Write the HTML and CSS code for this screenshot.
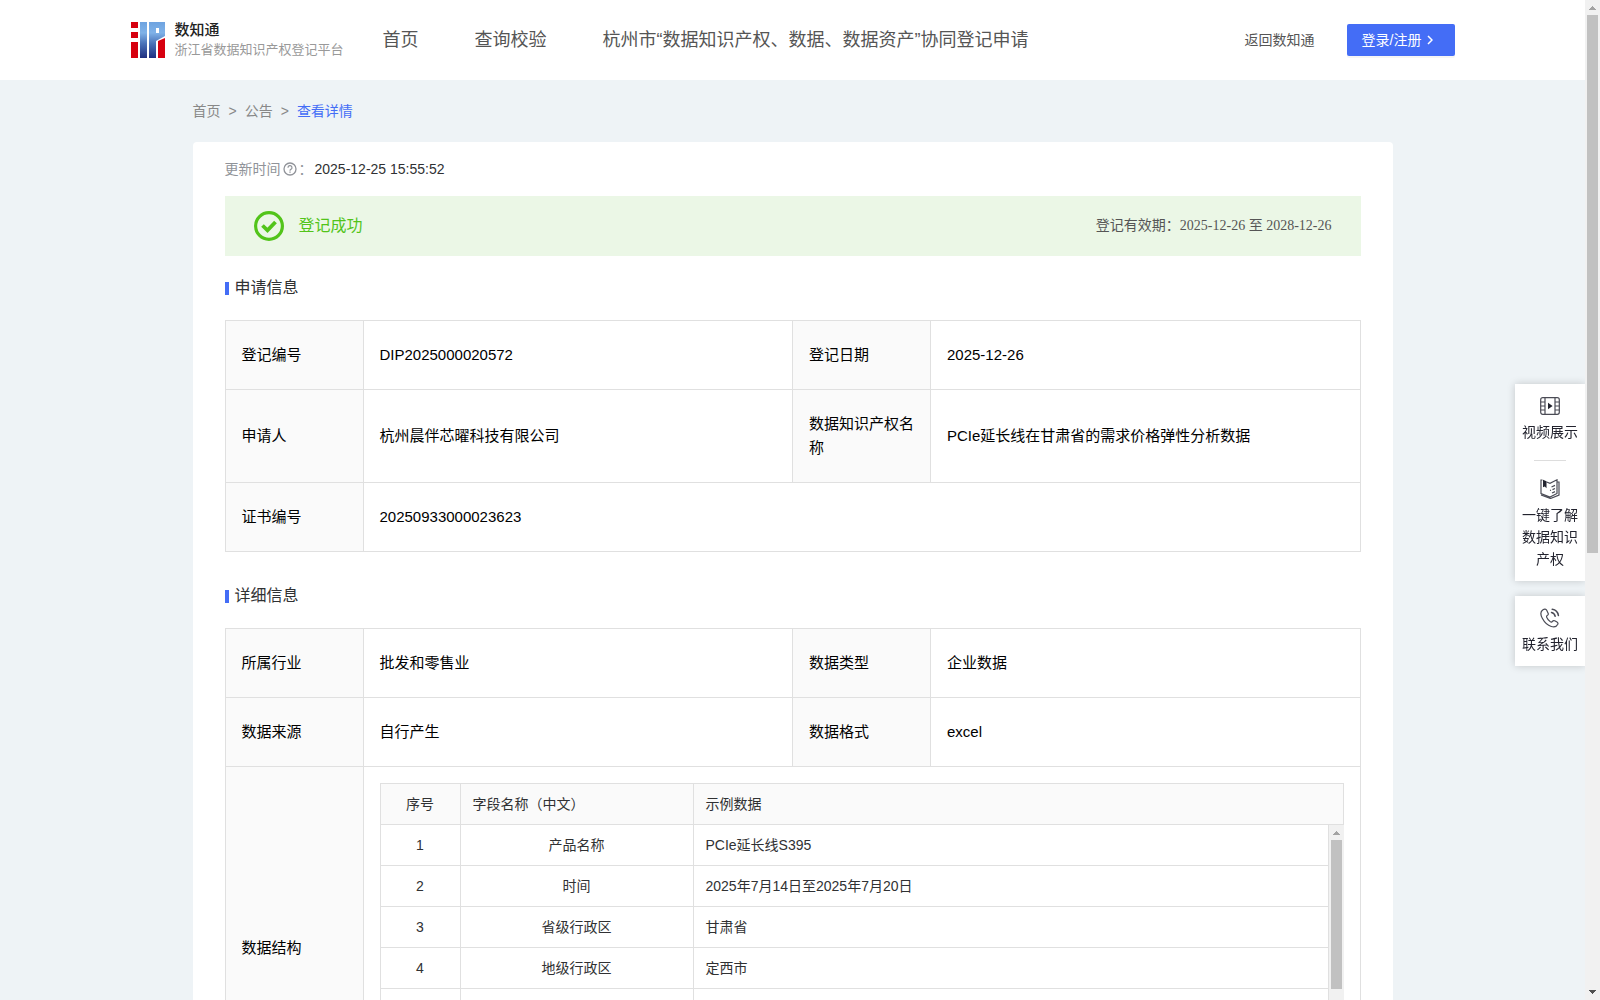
FILE: index.html
```html
<!DOCTYPE html>
<html lang="zh-CN">
<head>
<meta charset="utf-8">
<title>数知通</title>
<link rel="stylesheet" href="styles.css">
</head>
<body>
<div class="shell">
  <div class="page">
    <header class="topbar">
      <div class="topbar-inner">
        <a class="brand" href="#">
          <svg class="brand-mark" width="34" height="36" viewBox="0 0 34 36" aria-hidden="true">
            <defs>
              <linearGradient id="blue" x1="0" y1="0" x2="0" y2="1">
                <stop offset="0" stop-color="#6ea3e0"/>
                <stop offset=".3" stop-color="#7fb2e8"/>
                <stop offset=".6" stop-color="#4a72b8"/>
                <stop offset="1" stop-color="#1f2f80"/>
              </linearGradient>
            </defs>
            <path fill="#d7000f" d="M0 0h7v6H0zM0 10h7v6H0zM0 20h7v16H0zM27 19l7-3v20h-7z"/>
            <path fill="url(#blue)" d="M9 0h7v36H9zM18 0h16v14l-9 5v17h-7zM25 6v5h3V6z" fill-rule="evenodd"/>
          </svg>
          <span class="brand-text">
            <strong class="brand-name">数知通</strong>
            <span class="brand-sub">浙江省数据知识产权登记平台</span>
          </span>
        </a>
        <nav class="nav">
          <a href="#">首页</a>
          <a href="#">查询校验</a>
          <a href="#">杭州市“数据知识产权、数据、数据资产”协同登记申请</a>
        </nav>
        <a class="back" href="#">返回数知通</a>
        <button class="login" type="button">登录/注册
          <svg width="6" height="10" viewBox="0 0 6 10" aria-hidden="true"><path d="M1 1l4 4-4 4" fill="none" stroke="#fff" stroke-width="1.5"/></svg>
        </button>
      </div>
    </header>

    <main class="content">
      <nav class="crumbs">
        <a href="#">首页</a><span>&gt;</span><a href="#">公告</a><span>&gt;</span><a class="current" href="#">查看详情</a>
      </nav>

      <div class="card">
        <div class="updated">
          <span>更新时间</span>
          <svg width="18" height="16" viewBox="0 0 18 16" fill="none" stroke="#909399" aria-hidden="true">
            <circle cx="9" cy="8" r="6" stroke-width="1.3"/>
            <path d="M7 6.700a2 2 0 1 1 2.900 1.700c-.6.3-.9.6-.9 1.300" stroke-width="1.2"/>
            <path d="M9 10.600v1.200" stroke-width="1.3"/>
          </svg>
          <span>：</span>
          <time>2025-12-25 15:55:52</time>
        </div>

        <div class="banner">
          <svg width="30" height="30" viewBox="0 0 30 30" fill="none" stroke="#52c41a" aria-hidden="true">
            <circle cx="15" cy="15" r="13.4" stroke-width="3.2"/>
            <path d="M8.500 14.500l5 4.800 8-8.300" stroke-width="3.8"/>
          </svg>
          <span class="banner-state">登记成功</span>
          <span class="banner-term">登记有效期：2025-12-26 至 2028-12-26</span>
        </div>

        <h2 class="section-title">申请信息</h2>
        <table class="info">
          <colgroup><col class="col-label"><col><col class="col-label"><col></colgroup>
          <tbody>
            <tr><th scope="row">登记编号</th><td>DIP2025000020572</td><th scope="row">登记日期</th><td>2025-12-26</td></tr>
            <tr><th scope="row">申请人</th><td>杭州晨伴芯曜科技有限公司</td><th scope="row">数据知识产权名称</th><td>PCIe延长线在甘肃省的需求价格弹性分析数据</td></tr>
            <tr><th scope="row">证书编号</th><td colspan="3">20250933000023623</td></tr>
          </tbody>
        </table>

        <h2 class="section-title">详细信息</h2>
        <table class="info">
          <colgroup><col class="col-label"><col><col class="col-label"><col></colgroup>
          <tbody>
            <tr><th scope="row">所属行业</th><td>批发和零售业</td><th scope="row">数据类型</th><td>企业数据</td></tr>
            <tr><th scope="row">数据来源</th><td>自行产生</td><th scope="row">数据格式</th><td>excel</td></tr>
            <tr>
              <th scope="row">数据结构</th>
              <td class="nested" colspan="3">
                <table class="fields fields-head">
                  <colgroup><col class="col-no"><col class="col-name"><col></colgroup>
                  <thead><tr><th scope="col">序号</th><th scope="col">字段名称（中文）</th><th scope="col">示例数据</th></tr></thead>
                </table>
                <div class="fields-body">
                  <div class="fields-scroll">
                    <table class="fields">
                      <colgroup><col class="col-no"><col class="col-name"><col></colgroup>
                      <tbody>
                        <tr><td>1</td><td>产品名称</td><td>PCIe延长线S395</td></tr>
                        <tr><td>2</td><td>时间</td><td>2025年7月14日至2025年7月20日</td></tr>
                        <tr><td>3</td><td>省级行政区</td><td>甘肃省</td></tr>
                        <tr><td>4</td><td>地级行政区</td><td>定西市</td></tr>
                        <tr><td></td><td></td><td></td></tr>
                        <tr><td></td><td></td><td></td></tr>
                        <tr><td></td><td></td><td></td></tr>
                      </tbody>
                    </table>
                  </div>
                  <div class="scrollbar" aria-hidden="true">
                    <svg class="arrow" width="15" height="15"><path d="M4 10h7v-1h-1v-1h-1v-1h-1v-1h-1v1h-1v1h-1v1h-1z" fill="#a3a3a3"/></svg>
                    <div class="track"><div class="thumb thumb-fields"></div></div>
                  </div>
                </div>
              </td>
            </tr>
          </tbody>
        </table>
      </div>
    </main>
  </div>

  <div class="scrollbar" aria-hidden="true">
    <svg class="arrow" width="15" height="15"><path d="M4 10h7v-1h-1v-1h-1v-1h-1v-1h-1v1h-1v1h-1v1h-1z" fill="#a3a3a3"/></svg>
    <div class="track"><div class="thumb thumb-page"></div></div>
    <svg class="arrow" width="15" height="15"><path d="M4 5h7v1h-1v1h-1v1h-1v1h-1v-1h-1v-1h-1v-1h-1z" fill="#505050"/></svg>
  </div>

  <aside class="dock">
    <div class="dock-box">
      <a class="dock-item" href="#">
        <svg width="20" height="20" viewBox="0 0 20 20" fill="none" stroke="#4a4b55" stroke-width="1.2" aria-hidden="true">
          <rect x=".7" y="1.700" width="18.600" height="16.600" rx="2"/>
          <path d="M5 1.700v16.600M15 1.700v16.600M.7 6H5M.7 10H5M.7 14H5M15 6h4.300M15 10h4.300M15 14h4.300"/>
          <path d="M8 6.800v6.400l4.600-3.200z" fill="#22232e" stroke="none"/>
        </svg>
        <span>视频展示</span>
      </a>
      <hr class="dock-line">
      <a class="dock-item" href="#">
        <svg width="20" height="20" viewBox="0 0 20 20" fill="none" stroke="#4a4b55" stroke-width="1.200" aria-hidden="true">
          <path d="M2.500 1H1v13.500l9 3.500 7-3.500V.800L10 4.300 6.500 3M17 3h2v13l-8.500 3.500L1 16"/>
          <path d="M3 .800l3.500 1.500v7L4.800 7.500 3 8.300z" fill="#22232e" stroke="none"/>
          <path d="M11.500 8l3.500-1.600M10 11.500l1-.4M12 14l3-1.400M12.500 10.600l2.500-1.100"/>
        </svg>
        <span>一键了解数据知识产权</span>
      </a>
    </div>
    <div class="dock-box">
      <a class="dock-item" href="#">
        <svg width="20" height="20" viewBox="0 0 20 20" fill="none" stroke="#4a4b55" stroke-width="1.200" stroke-linecap="round" aria-hidden="true">
          <path d="M3 1.700C.5 3.300.3 6.500 2.300 10.200c2 3.800 5.600 7.200 9 8.300 2.700.9 5.300.2 6.500-2.200.4-.9 0-1.700-.8-2.200l-2.300-1.300c-.9-.5-1.700-.2-2.300.6-.6.8-1.300.9-2.200.2C8.500 12.300 7.300 10.700 6.700 9.200c-.3-.9 0-1.500.8-1.900.8-.5 1-1.300.6-2.100L6.700 2.300C6 1 4.500.8 3 1.700z"/>
          <path d="M11.500 4.500c2 .5 3.200 1.700 3.700 3.700M12.200 1.300c3.300.5 5.700 2.900 6.200 6.200" stroke-width="1.500"/>
        </svg>
        <span>联系我们</span>
      </a>
    </div>
  </aside>
</div>
</body>
</html>
```
FILE: styles.css
```css
* {
  box-sizing: border-box;
}

body {
  margin: 0;
  background: #eef3f6;
  color: #303133;
  font: 14px/22px "Liberation Sans", "Noto Sans CJK SC", sans-serif;
}

a {
  color: inherit;
  text-decoration: none;
}

svg {
  display: block;
  flex: none;
}

.shell {
  display: flex;
  height: 100vh;
}

.page {
  flex: 1;
  min-width: 0;
  overflow-y: auto;
  scrollbar-width: none;
}

/* Header */

.topbar {
  background: #fff;
}

.topbar-inner {
  display: flex;
  align-items: center;
  max-width: 1324px;
  height: 80px;
  margin: 0 auto;
}

.brand {
  display: flex;
  align-items: center;
  gap: 10px;
  width: 224px;
}

.brand-text {
  display: flex;
  flex-direction: column;
  white-space: nowrap;
}

.brand-name {
  color: #222;
  font-size: 15px;
  font-weight: 500;
  line-height: 20px;
}

.brand-sub {
  color: #999;
  font-size: 13px;
  line-height: 20px;
}

.nav {
  display: flex;
  flex: 1;
  color: #555;
  font-size: 18px;
  white-space: nowrap;
}

.nav a {
  padding: 0 28px;
}

.back {
  margin-right: 32px;
  color: #555;
}

.login {
  display: flex;
  align-items: center;
  gap: 6px;
  width: 108px;
  height: 32px;
  padding: 0 15px;
  border: 0;
  border-radius: 2px;
  background: #446df6;
  box-shadow: 0 2px 0 rgba(0, 0, 0, 0.04);
  color: #fff;
  font: inherit;
  white-space: nowrap;
}

/* Page body */

.content {
  max-width: 1200px;
  margin: 0 auto;
}

.crumbs {
  display: flex;
  gap: 8px;
  padding: 20px 0;
  color: #888;
}

.crumbs .current {
  color: #446df6;
}

.card {
  padding: 16px 32px 32px;
  border-radius: 4px;
  background: #fff;
}

.updated {
  display: flex;
  align-items: center;
  color: #909399;
}

.updated time {
  margin-left: 2px;
  color: #303133;
}

.banner {
  display: flex;
  align-items: center;
  height: 60px;
  margin-top: 16px;
  padding: 0 29px;
  background: #ebf7e6;
}

.banner-state {
  margin-left: 15px;
  color: #52c41a;
  font-size: 16px;
}

.banner-term {
  margin-left: auto;
  color: #555;
  font-family: "Liberation Serif", "Noto Sans CJK SC", serif;
}

.section-title {
  display: flex;
  align-items: center;
  gap: 6px;
  margin: 20px 0;
  font-size: 16px;
  font-weight: 400;
  line-height: 24px;
}

.section-title::before {
  width: 4px;
  height: 13px;
  background: #446df6;
  content: "";
}

.info + .section-title {
  margin-top: 32px;
}

/* Tables */

.info {
  width: 100%;
  border: solid #e0e0e0;
  border-width: 1px 0 0 1px;
  border-spacing: 0;
  table-layout: fixed;
  color: #000;
  font-size: 15px;
  line-height: 24px;
}

.info th,
.info td {
  padding: 22px 15px 22px 16px;
  border: solid #e0e0e0;
  border-width: 0 1px 1px 0;
  font-weight: 400;
  text-align: left;
}

.info th {
  background: #fafafa;
}

.col-label {
  width: 138px;
}

.info .nested {
  padding: 16px;
}

.fields {
  width: 100%;
  border-left: 1px solid #e0e0e0;
  border-spacing: 0;
  table-layout: fixed;
  color: #303133;
  font-size: 14px;
}

.fields-head {
  border-top: 1px solid #e0e0e0;
}

.info .fields th,
.info .fields td {
  height: 41px;
  padding: 0 12px;
}

.info .fields tr > :first-child,
.info .fields td:nth-child(2) {
  text-align: center;
}

.col-no {
  width: 80px;
}

.col-name {
  width: 233px;
}

.fields-body {
  display: flex;
}

.fields-scroll {
  flex: 1;
}

/* Scrollbars */

.scrollbar {
  display: flex;
  flex: none;
  flex-direction: column;
  width: 15px;
  background: #f1f1f1;
}

.track {
  flex: 1;
  padding: 0 2px;
}

.thumb {
  background: #c1c1c1;
}

.thumb-page {
  height: 55.5%;
}

.thumb-fields {
  height: 149px;
}

/* Floating shortcuts */

.dock {
  position: fixed;
  top: 384px;
  right: 15px;
  display: flex;
  flex-direction: column;
  gap: 15px;
  width: 70px;
}

.dock-box {
  padding: 12px 7px 11px;
  background: #fff;
  box-shadow: 0 0 8px rgba(0, 0, 0, 0.18);
  clip-path: inset(-10px 0 -10px -10px);
}

.dock-item {
  display: flex;
  flex-direction: column;
  align-items: center;
  gap: 5px;
  color: #22232e;
  text-align: center;
}

.dock-line {
  width: 32px;
  height: 1px;
  margin: 17px auto 18px;
  border: 0;
  background: #ddd;
}
```
